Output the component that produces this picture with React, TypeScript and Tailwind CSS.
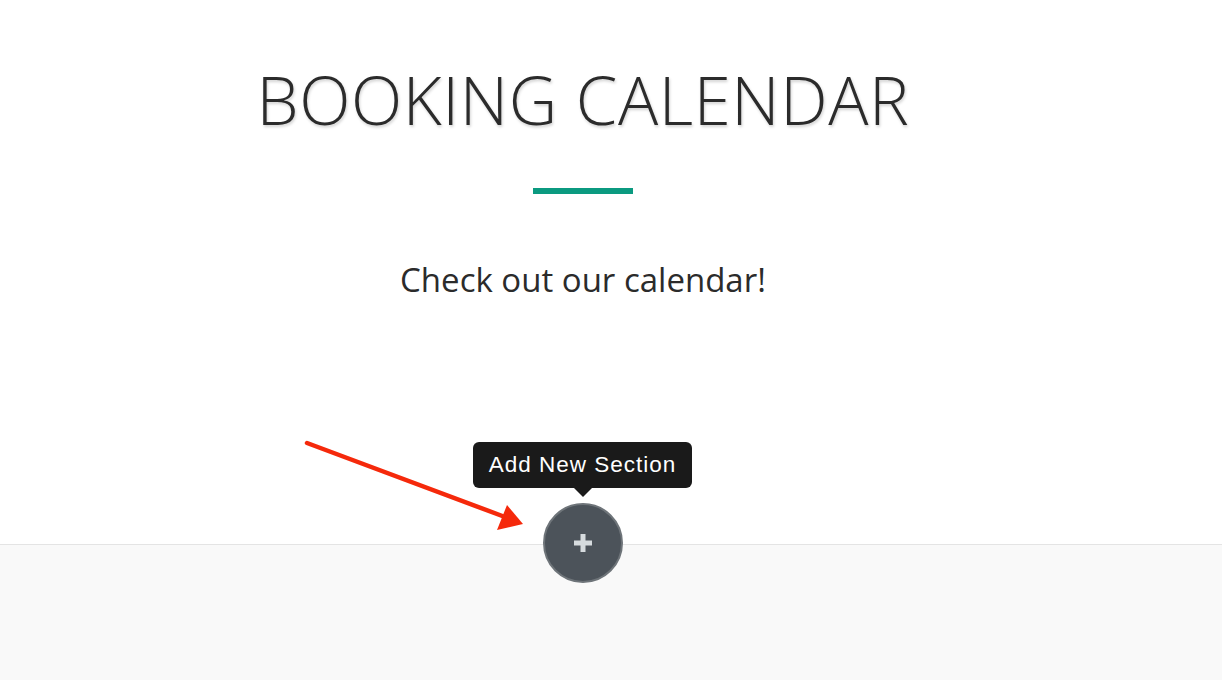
export default function App() {
  return (
    <div className="relative min-h-[680px] bg-white font-['Open_Sans',sans-serif] text-[#2b2b2b]">
      <section className="h-[544px] pr-[56px]">
        <div className="flex flex-col items-center pt-[66px]">
          <h1 className="text-[67px] font-[350] leading-none tracking-[0.6px] [text-shadow:1px_2px_3px_rgba(0,0,0,0.18)]">
            BOOKING CALENDAR
          </h1>
          <div className="mt-[55px] h-[6px] w-[100px] bg-[#0b9a80]" />
          <p className="mt-[69px] text-[33px] leading-none">Check out our calendar!</p>
        </div>
      </section>

      <section className="h-[136px] border-t border-[#e4e4e4] bg-[#f9f9f9]" />

      {/* add-section control sitting on the section border */}
      <div className="absolute left-[473px] top-[442px] flex w-[219px] flex-col items-center">
        <div className="flex h-[46px] w-full items-center justify-center rounded-[6px] bg-[#1a1a1a] font-['Liberation_Sans',Arial,sans-serif] text-[22.5px] tracking-[1px] text-white">
          Add New Section
        </div>
        <div className="h-0 w-0 border-x-[9px] border-t-[9px] border-x-transparent border-t-[#1a1a1a]" />
      </div>

      <button className="absolute left-[543px] top-[503px] flex h-[80px] w-[80px] items-center justify-center rounded-full border-2 border-[#6e7479] bg-[#4c535a]">
        <svg width="22" height="22" viewBox="0 0 22 22">
          <path d="M11 2v18M2 11h18" stroke="#d6dbde" strokeWidth="5" />
        </svg>
      </button>

      <svg className="absolute left-0 top-0" width="1222" height="680" viewBox="0 0 1222 680" fill="none">
        <line x1="307" y1="443" x2="505" y2="517" stroke="#f5290b" strokeWidth="4.5" strokeLinecap="round" />
        <polygon points="523,524 497,530 507,505" fill="#f5290b" />
      </svg>
    </div>
  );
}
